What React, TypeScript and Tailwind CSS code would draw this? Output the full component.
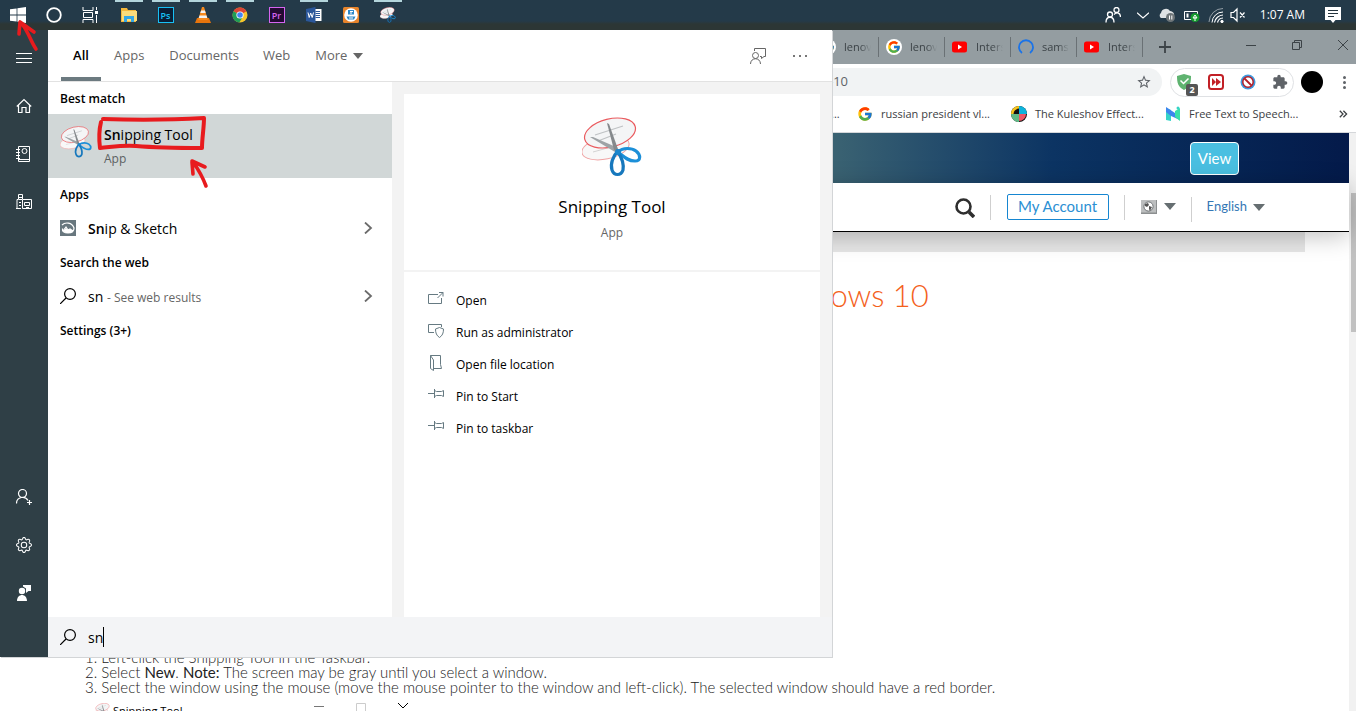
import type { ReactNode } from "react";
import clsx from "clsx";
import { FcGoogle } from "react-icons/fc";
import { BsGear } from "react-icons/bs";
import { MdExtension, MdStarBorder } from "react-icons/md";

type IconProps = { className?: string };

function Line({ className, children, box = 16 }: IconProps & { children: ReactNode; box?: number }) {
  return (
    <svg
      viewBox={`0 0 ${box} ${box}`}
      fill="none"
      stroke="currentColor"
      strokeWidth="1"
      className={clsx("shrink-0", className ?? "size-4")}
      aria-hidden="true"
    >
      {children}
    </svg>
  );
}

function SnippingIcon({ className }: IconProps) {
  return (
    <svg viewBox="0 0 60 60" fill="none" className={clsx("shrink-0", className)} aria-hidden="true">
      <ellipse cx="23.500" cy="31" rx="24" ry="11" transform="rotate(-12 23.500 31)" fill="#f8f8f8" stroke="#efa3a3" strokeWidth="1" />
      <path d="M11 35l18-5" stroke="#d4d4d4" />
      <ellipse cx="28" cy="16" rx="26" ry="14" transform="rotate(-14 28 16)" fill="#f4f5f6" stroke="#ea5a5e" strokeWidth="1.200" />
      <path d="M13 18l28-9M16 24l18-7" stroke="#bfc2c4" strokeWidth="1.200" />
      <path d="M8 20l3 0 23 10 2 4-3 1z" fill="#9ea3a6" />
      <path d="M25 6l2 1 9 25-1 3-3-2z" fill="#85898c" />
      <path d="M36 35c5-5 14-4 18-1 5 4 5 10-1 10-7 0-11-4-16-8" stroke="#1c8fd8" strokeWidth="3.200" />
      <path d="M36 34c-5 5-8 13-6 19 2 6 9 6 11 0 1-6-1-12-5-18" stroke="#1778bd" strokeWidth="3.200" />
      <circle cx="36" cy="35" r="3" fill="#1c86cc" />
    </svg>
  );
}

function PeopleIcon() {
  return (
    <Line className="size-4">
      <circle cx="5" cy="7.500" r="2.500" strokeWidth="1.300" />
      <path d="M1 15.500c0-7 8-7 8 0" strokeWidth="1.300" />
      <circle cx="11.500" cy="3" r="2.500" strokeWidth="1.300" />
      <path d="M9 7.500c3-3 6.500-1.500 6.500 2.500" strokeWidth="1.300" />
    </Line>
  );
}

const WindowsLogo = () => (
  <svg viewBox="0 0 16 16" className="size-4" fill="#fff" aria-hidden="true">
    <path d="M0 2.300l6.600-.9v6.200H0zM7.400 1.300L16 0v7.600H7.400zM0 8.400h6.600v6.200L0 13.700zM7.400 8.400H16V16l-8.600-1.200z" />
  </svg>
);

const CortanaRing = () => (
  <Line className="size-4">
    <circle cx="8" cy="8" r="6.800" strokeWidth="1.800" />
  </Line>
);

const TaskViewIcon = () => (
  <Line className="size-4">
    <path d="M1 0v3.500h10V0M1 16v-3.500h10V16M1.500 5.500h9v5h-9zM14.500 0v3M14.500 8v8" />
    <rect x="13" y="4" width="3" height="3" fill="currentColor" stroke="none" />
  </Line>
);

const FolderIcon = () => (
  <svg viewBox="0 0 16 16" className="size-4" aria-hidden="true">
    <path d="M0 1h6l1 2h8v12H0z" fill="#f5b83d" />
    <path d="M1 4h15v10H1z" fill="#fcdc7c" />
    <path d="M3 9h10v6h-3v-3H6v3H3z" fill="#35a7e6" />
  </svg>
);

function AdobeIcon({ label, tone }: { label: string; tone: string }) {
  return (
    <span className={clsx("flex size-4 items-center justify-center border font-['Open_Sans',sans-serif] text-[9px] font-semibold leading-none", tone)}>
      {label}
    </span>
  );
}

const VlcIcon = () => (
  <svg viewBox="0 0 16 16" className="size-4" aria-hidden="true">
    <path d="M2 11h12l2 5H0z" fill="#e8750c" />
    <path d="M7 0h2l4 13H3z" fill="#f58a1f" />
    <path d="M6.100 3.500h3.800l.8 2.500H5.300zM4.500 8.500h7l.8 2.500H3.700z" fill="#f3f3f3" />
  </svg>
);

const ChromeIcon = () => (
  <svg viewBox="0 0 16 16" className="size-4" aria-hidden="true">
    <circle cx="8" cy="8" r="7.500" fill="#f7c52b" />
    <path d="M8 8L1.500 4.200A7.500 7.500 0 0 1 14.500 4.300z" fill="#db4437" />
    <path d="M8 8L1.500 4.200A7.500 7.500 0 0 0 7.300 15.500L11 9.500z" fill="#1f9d58" />
    <circle cx="8" cy="8" r="3.600" fill="#fff" />
    <circle cx="8" cy="8" r="2.800" fill="#4285f4" />
  </svg>
);

const WordIcon = () => (
  <svg viewBox="0 0 16 16" className="size-4" aria-hidden="true">
    <path d="M8 2h7.500v12H8z" fill="#fff" />
    <path d="M9.500 4.500H14M9.500 6.500H14M9.500 8.500H14M9.500 10.500H14" stroke="#2b579a" />
    <path d="M0 2l9.500-2v16L0 14z" fill="#2b579a" />
    <path d="M2 5.500l1.200 5L4.700 6l1.500 4.500L7.500 5.500" stroke="#fff" fill="none" />
  </svg>
);

const OrangeAppIcon = () => (
  <svg viewBox="0 0 16 16" className="size-4" aria-hidden="true">
    <rect width="16" height="16" rx="1.500" fill="#e8842b" />
    <circle cx="8" cy="8" r="6.800" fill="#fff" />
    <path d="M5 3h6v4.500H5zM3.500 9.500h9L11 12.500H5z" fill="#2d88c9" />
    <path d="M7 4.500h3M7 6h2M6 11h4" stroke="#fff" />
  </svg>
);

const taskbarApps = [
  { name: "File Explorer", icon: <FolderIcon />, open: true },
  { name: "Photoshop", icon: <AdobeIcon label="Ps" tone="border-[#18c0f5] bg-[#0a1e36] text-[#18c0f5]" />, open: true },
  { name: "VLC", icon: <VlcIcon />, open: true },
  { name: "Chrome", icon: <ChromeIcon />, open: true },
  { name: "Premiere", icon: <AdobeIcon label="Pr" tone="border-[#d565f0] bg-[#230a33] text-[#d565f0]" />, open: false },
  { name: "Word", icon: <WordIcon />, open: true },
  { name: "Scanner", icon: <OrangeAppIcon />, open: false },
  { name: "Snipping Tool", icon: <SnippingIcon className="size-4" />, open: true },
];

function Taskbar() {
  return (
    <header className="flex h-[30px] shrink-0 items-center justify-between bg-linear-to-b from-[#243a49] from-70% to-[#2c3635] to-80% text-white">
      <div className="flex h-full items-center">
        <button aria-label="Start" className="flex h-full w-9 items-center justify-center"><WindowsLogo /></button>
        <button aria-label="Cortana" className="flex h-full w-9 items-center justify-center"><CortanaRing /></button>
        <button aria-label="Task view" className="flex h-full w-9 items-center justify-center"><TaskViewIcon /></button>
        <div className="ml-0.5 flex h-full">
          {taskbarApps.map((app) => (
            <button key={app.name} aria-label={app.name} className="flex h-full w-[37px] flex-col items-center">
              <span className={clsx("h-0.5 w-7", app.open && "bg-[#b4d5dc]")} />
              <span className="mt-[5px]">{app.icon}</span>
            </button>
          ))}
        </div>
      </div>

      <div className="flex h-full items-center pr-[15px]">
        <PeopleIcon />
        <Line className="ml-4 w-3"><path d="M0 5l8 7 8-7" strokeWidth="1.600" /></Line>
        <svg viewBox="0 0 16 14" className="ml-2.5 h-3.5 w-4" aria-hidden="true">
          <path d="M2 10a3 3 0 0 1 0-5 5 5 0 0 1 9-2 4 4 0 0 1 4 5v2z" fill="#dfe3e5" />
          <circle cx="11.500" cy="9.500" r="4.500" fill="#6f7679" />
          <path d="M10.500 7.500v4M12.800 7.500v4" stroke="#fff" />
        </svg>
        <svg viewBox="0 0 16 14" className="ml-[9px] h-3.5 w-4" fill="none" aria-hidden="true">
          <path d="M.5 3.500h13v8H.5z" stroke="#fff" />
          <path d="M2.500 5.500h2v4h-2z" fill="#fff" />
          <circle cx="11" cy="9.500" r="4.500" fill="#169b2e" />
          <path d="M9 10l2-3 2 3zM11 9v4" stroke="#fff" />
        </svg>
        <Line className="ml-2 size-4">
          <path d="M6.500 15.500A9 9 0 0 1 15 8M9.500 15.500A6 6 0 0 1 15 11" strokeWidth="1.200" />
          <path d="M4 15.500A11 11 0 0 1 15 5" />
          <path d="M1 15A14 14 0 0 1 15 1.500" opacity=".5" />
          <circle cx="14" cy="14.500" r="1.200" fill="currentColor" />
        </Line>
        <Line className="ml-1.5 size-4">
          <path d="M1 5.500h2.500L7 2v12l-3.500-3.500H1zM10 5.500l4.500 5M14.500 5.500l-4.500 5" strokeWidth="1.200" />
        </Line>
        <time className="ml-3.5 text-[12px]">1:07 AM</time>
        <svg viewBox="0 0 16 16" className="ml-5 size-4" aria-hidden="true">
          <path d="M0 0h16v13h-5.500L8 16l-2.500-3H0z" fill="#fff" />
          <path d="M3 3.500h10M3 6.500h10M3 9.500h6" stroke="#24343d" />
        </svg>
      </div>
    </header>
  );
}

const YoutubeIcon = () => (
  <svg viewBox="0 0 16 16" className="size-4 shrink-0" aria-hidden="true">
    <rect x="0" y="2.500" width="15" height="11" rx="2.500" fill="#f00" />
    <path d="M6 5.500v5l4-2.500z" fill="#fff" />
  </svg>
);

const GoogleBadge = () => (
  <span className="flex size-4 shrink-0 items-center justify-center rounded-full bg-white"><FcGoogle className="size-3.5" /></span>
);

const LoadingRing = () => (
  <Line className="size-4 text-[#1a73e8]"><path d="M4 14A7 7 0 1 1 12 14" strokeWidth="1.800" /></Line>
);

const browserTabs = [
  { id: 1, label: "lenovo", icon: <GoogleBadge /> },
  { id: 2, label: "lenovo", icon: <GoogleBadge /> },
  { id: 3, label: "Interstellar", icon: <YoutubeIcon /> },
  { id: 4, label: "samsung", icon: <LoadingRing /> },
  { id: 5, label: "Interstellar", icon: <YoutubeIcon /> },
];

function TabStrip() {
  return (
    <div className="flex h-[34px] items-center bg-[#949da1] pl-[813px] text-[#3c4347]">
      {browserTabs.map((tab) => (
        <button key={tab.id} className="flex h-5 w-[66px] items-center gap-2 border-r border-[#6a7175] px-[7px]">
          {tab.icon}
          <span className="min-w-0 flex-1 overflow-hidden whitespace-nowrap mask-r-from-60% text-left text-[11px]">{tab.label}</span>
        </button>
      ))}
      <button aria-label="New tab" className="ml-4"><Line className="size-3"><path d="M8 0v16M0 8h16" strokeWidth="2.400" /></Line></button>
      <div className="ml-auto flex gap-9 pb-1 pr-2">
        <button aria-label="Minimize"><Line className="size-2.5" box={10}><path d="M0 5.500h10" /></Line></button>
        <button aria-label="Restore"><Line className="size-2.5" box={10}><path d="M.5 2.500h7v7h-7zM2.500 2.500v-2h7v7h-2" /></Line></button>
        <button aria-label="Close"><Line className="size-2.5" box={10}><path d="M0 0l10 10M10 0L0 10" /></Line></button>
      </div>
    </div>
  );
}

function Toolbar() {
  return (
    <div className="flex h-9 items-center bg-white pr-2.5">
      <div className="flex h-7 flex-1 items-center justify-between rounded-full bg-[#f1f3f4] pl-[829px] pr-2.5 text-[13px] text-[#5f6368]">
        <span>-10</span>
        <button aria-label="Bookmark this page"><MdStarBorder className="size-4" /></button>
      </div>
      <div className="ml-2 flex h-[29px] items-center gap-4 rounded-full border border-[#dfe1e4] px-[5px]">
        <button aria-label="Ad blocker" className="relative">
          <svg viewBox="0 0 16 16" className="size-4" aria-hidden="true">
            <path d="M8 0l7 2c0 7-1 11-7 14C2 13 1 9 1 2z" fill="#5fb370" />
            <path d="M4.500 6.500l3 3 5-5" stroke="#fff" strokeWidth="1.500" fill="none" />
          </svg>
          <span className="absolute -right-1.5 top-2.5 h-3 w-3 rounded-xs bg-[#555] text-center text-[9px] font-bold leading-3 text-white">2</span>
        </button>
        <button aria-label="Skip">
          <svg viewBox="0 0 16 16" className="size-4" aria-hidden="true">
            <rect x="1" y="1" width="14" height="14" rx="2.500" fill="#fff" stroke="#c22026" strokeWidth="2" />
            <path d="M4 4l4 4-4 4zM8 4l5 4-5 4z" fill="#c22026" />
          </svg>
        </button>
        <button aria-label="Block">
          <svg viewBox="0 0 16 16" className="size-4" aria-hidden="true">
            <circle cx="8" cy="8" r="7.500" fill="#3e9be0" />
            <circle cx="8" cy="8" r="5.200" fill="#fff" stroke="#b3202a" strokeWidth="1.500" />
            <path d="M4.500 4.500l7 7" stroke="#b3202a" strokeWidth="1.800" />
          </svg>
        </button>
        <button aria-label="Extensions"><MdExtension className="size-4 text-[#5f6368]" /></button>
      </div>
      <button aria-label="Profile" className="ml-[7px] size-[22px] rounded-full bg-black" />
      <button aria-label="Menu" className="ml-[19px] flex w-1 flex-col items-center gap-0.5">
        <span className="size-[3px] rounded-full bg-[#5f6368]" />
        <span className="size-[3px] rounded-full bg-[#5f6368]" />
        <span className="size-[3px] rounded-full bg-[#5f6368]" />
      </button>
    </div>
  );
}

function Bookmarks() {
  return (
    <nav className="flex h-[33px] items-center border-b border-[#d5d7da] bg-white pb-1 pl-[831px] pr-2 text-[11px] text-[#3c4043]">
      <span className="w-[26px]">...</span>
      <a href="#russian" className="flex w-[154px] items-center gap-2 whitespace-nowrap"><FcGoogle className="size-4 shrink-0" />russian president vl...</a>
      <a href="#kuleshov" className="flex w-[154px] items-center gap-2 whitespace-nowrap">
        <svg viewBox="0 0 16 16" className="size-4 shrink-0" aria-hidden="true">
          <circle cx="8" cy="8" r="8" fill="#111" />
          <path d="M8 8V0a8 8 0 0 1 8 8z" fill="#0db4dd" />
          <path d="M8 8h7a7 7 0 0 1-7 7z" fill="#ef5666" />
          <path d="M8 8v8a8 8 0 0 1-8-8z" fill="#5fb986" />
          <path d="M0 8a8 8 0 0 1 8-8v2.500A6 6 0 0 0 2.500 8z" fill="#f7c51e" />
        </svg>
        The Kuleshov Effect...
      </a>
      <a href="#speech" className="flex items-center gap-2 whitespace-nowrap">
        <svg viewBox="0 0 16 16" className="size-4 shrink-0" aria-hidden="true">
          <path d="M1 2l5 2v11l-5-1z" fill="#35d3c8" />
          <path d="M1 1l9 6 5 7-9-4-5-4z" fill="#3c86ee" />
          <path d="M10 5l5-3v13l-5-4z" fill="#3be0a8" />
          <circle cx="13" cy="2" r="1.500" fill="#35d3c8" />
        </svg>
        Free Text to Speech...
      </a>
      <button aria-label="More bookmarks" className="ml-auto">
        <Line className="h-2 w-2.5" box={10}><path d="M1 1l4 4-4 4M5.500 1l4 4-4 4" strokeWidth="1.600" /></Line>
      </button>
    </nav>
  );
}

const Caret = ({ className }: IconProps) => (
  <svg viewBox="0 0 12 7" className={className} fill="currentColor" aria-hidden="true"><path d="M0 0h12L6 7z" /></svg>
);

function WebPage() {
  return (
    <div className="flex min-h-0 flex-1 bg-white">
      <div className="flex min-w-0 flex-1 flex-col font-[Lato,sans-serif]">
        <div className="flex h-[50px] shrink-0 items-center justify-end bg-linear-to-r from-[#3a6272] from-62% via-[#0c3463] via-78% to-[#041a4a] pr-[110px]">
          <button className="h-[33px] w-[49px] rounded-sm border border-white bg-[#4abfe1] text-[15px] text-white">View</button>
        </div>
        <div className="z-0 flex h-[49px] shrink-0 items-center justify-end border-b border-black bg-white pr-[84px] shadow-[0_4px_24px_rgba(0,0,0,0.25)]">
          <button aria-label="Search">
            <Line className="mt-0.5 size-5 text-[#2e2e2e]" box={20}><circle cx="8.500" cy="8.500" r="7" strokeWidth="2.600" /><path d="M14 14l5 5" strokeWidth="3.600" /></Line>
          </button>
          <span className="ml-[15px] h-[25px] w-px bg-[#cfcfcf]" />
          <button className="ml-4 h-[26px] w-[102px] rounded-xs border border-[#1686d1] pb-0.5 text-[15px] leading-none text-[#2b8fd3]">My Account</button>
          <span className="ml-[15px] h-[25px] w-px bg-[#cfcfcf]" />
          <button aria-label="Region" className="ml-4 flex items-center gap-[7px] text-[#666e71]">
            <svg viewBox="0 0 16 14" className="h-3.5 w-4" aria-hidden="true">
              <path d="M0 0h16v14H0z" fill="#8c8f90" />
              <path d="M0 0h15v12.500H0z" fill="#bcbebf" />
              <circle cx="7.500" cy="6.500" r="4.600" fill="#fff" stroke="#6d7173" />
              <path d="M4 4l3-1 1 2-2 2-2-1zM8 6l3 1-2 4-1-2z" fill="#555" />
            </svg>
            <Caret className="mb-0.5 h-[7px] w-3" />
          </button>
          <span className="ml-[15px] mt-1 h-[25px] w-px bg-[#cfcfcf]" />
          <button className="ml-[15px] flex items-center gap-1.5 text-[13px] text-[#3577b5]">English <Caret className="h-[7px] w-3 text-[#666e71]" /></button>
        </div>
        <div className="mr-11 h-5 shrink-0 bg-[#e6e6e6]" />
        <h1 className="ml-[758px] mt-[25px] text-[31px] font-light leading-9 text-[#f4611b]">Windows 10</h1>
        <ol className="mt-auto list-inside list-decimal pl-[85px] text-[15px] font-light leading-[15px] text-[#222]">
          <li>Left-click the Snipping Tool in the Taskbar.</li>
          <li>Select <b>New</b>. <b>Note:</b> The screen may be gray until you select a window.</li>
          <li>Select the window using the mouse (move the mouse pointer to the window and left-click). The selected window should have a red border.</li>
        </ol>
        <div className="flex h-4 shrink-0 items-start overflow-hidden pl-[95px] pt-2 font-['Open_Sans',sans-serif] text-[11px] leading-4 text-black">
          <SnippingIcon className="mr-0.5 size-4" />
          <span className="w-[201px]">Snipping Tool</span>
          <Line className="w-2.5 text-[#777]" box={10}><path d="M0 3.500h10" /></Line>
          <Line className="ml-8 size-2.5 text-[#ccc]" box={10}><path d="M.5.500h9v9h-9z" /></Line>
          <Line className="ml-8 size-2.5" box={10}><path d="M0 0l5 5 5-5" /></Line>
        </div>
      </div>
      <div className="flex w-[7px] shrink-0 flex-col bg-[#f1f1f1] pl-0.5 pt-[60px]">
        <div className="h-[139px] bg-[#c1c1c1]" />
      </div>
    </div>
  );
}

const railTop = [
  { name: "Menu", icon: <Line><path d="M0 3.500h16M0 8.500h16M0 12.500h16" /></Line> },
  { name: "Home", icon: <Line><path d="M.8 8.500L8 1.500l7.200 7M2.500 7.500v7h3.500v-5h4v5h3.500v-7" strokeWidth="1.200" /></Line> },
  { name: "Notebook", icon: <Line><path d="M2.500.5h11v15h-11zM0 3.500h4M0 6.500h4M0 9.500h4M0 12.500h4M2.500 13.500h11" /><circle cx="8.500" cy="5" r="2.500" /></Line> },
  { name: "Devices", icon: <Line><path d="M1 14V5.500h1.500v-5h4v4.500M0 14.500h5M3 3.500h3M3 5.500h3M3 8.500h2M3 11.500h2M6.500 5.500h9v9h-9zM8.500 8.500h5v3h-5zM10 13.500h3" /></Line> },
];

const railBottom = [
  { name: "Account", icon: <Line><circle cx="6.500" cy="4.500" r="4" strokeWidth="1.200" /><path d="M.5 14.500c0-7 9-8 11.500-3M13.500 11v5M11 13.500h5" strokeWidth="1.200" /></Line> },
  { name: "Settings", icon: <BsGear className="size-4" /> },
  { name: "Feedback", icon: <svg viewBox="0 0 16 16" className="size-4" fill="#fff" aria-hidden="true"><circle cx="6" cy="6" r="3.200" /><path d="M1 16c0-8 10-8 10 0zM7 0h8v6h-2.500L10 8V3.500L7 1.500z" /></svg> },
];

function Rail() {
  return (
    <nav className="flex w-12 shrink-0 flex-col bg-[#2f3f46] pb-10 pt-1 text-white">
      {railTop.map((item) => (
        <button key={item.name} aria-label={item.name} className="flex h-12 items-center justify-center">{item.icon}</button>
      ))}
      <div className="flex-1" />
      {railBottom.map((item) => (
        <button key={item.name} aria-label={item.name} className="flex h-12 items-center justify-center">{item.icon}</button>
      ))}
    </nav>
  );
}

const SearchGlyph = () => (
  <Line className="size-4"><circle cx="10" cy="6" r="5.400" strokeWidth="1.200" /><path d="M6 10l-6 6" strokeWidth="1.200" /></Line>
);

const Chevron = () => (
  <Line className="ml-auto mr-[18px] size-3 text-[#6b6b6b]" box={12}><path d="M3 .5l6 5.500-6 5.500" strokeWidth="1.800" /></Line>
);

const SectionTitle = ({ children }: { children: ReactNode }) => (
  <h2 className="flex h-8 items-center px-3 pt-0.5 text-[12px] font-semibold">{children}</h2>
);

function Results() {
  return (
    <section className="w-[344px] shrink-0 bg-white text-black">
      <SectionTitle>Best match</SectionTitle>
      <button className="flex h-16 w-full items-start bg-[#d1d7d7] px-3 pt-2.5 text-left">
        <SnippingIcon className="mt-0.5 size-8" />
        <span className="ml-3 text-[14px] leading-[22px]">
          <b className="font-semibold">Sn</b>ipping Tool
          <span className="block pt-0.5 text-[12px] text-[#5c6162]">App</span>
        </span>
      </button>
      <SectionTitle>Apps</SectionTitle>
      <button className="flex h-9 w-full items-center pl-3 text-[14px]">
        <svg viewBox="0 0 16 16" className="mr-3 size-4" aria-hidden="true">
          <path d="M0 0h16v16H0z" fill="#68777e" />
          <path d="M2 5c3-3 10-3 12 3 0 4-3 5-6 5-4 0-6-2-5.500-4.500M3 11l3-4 2 3 2-1 3 2" stroke="#fff" strokeWidth="1.200" fill="none" />
          <path d="M3 11l3-3 2 2 2-1 3 2-3 2H6z" fill="#fff" />
        </svg>
        <span><b className="font-semibold">Sn</b>ip &amp; Sketch</span>
        <Chevron />
      </button>
      <SectionTitle>Search the web</SectionTitle>
      <button className="flex h-9 w-full items-center pl-3 text-[14px]">
        <SearchGlyph />
        <span className="ml-3">sn <span className="text-[12px] text-[#666]">- See web results</span></span>
        <Chevron />
      </button>
      <SectionTitle>Settings (3+)</SectionTitle>
    </section>
  );
}

const PinIcon = () => <Line><path d="M0 6.500h6M6.500 2v9M6.500 3.500l2 1h5l2-1v6l-2-1h-5l-2 1" /></Line>;

const actions = [
  { label: "Open", icon: <Line><path d="M10 3.500H.5v9h13V7M9.500 7l5.500-5.500M11 1.500h4v4" /></Line> },
  { label: "Run as administrator", icon: <Line><path d="M6 9.500H.5v-8h13V4M11.500 4.500l4 1.500c0 4-1 6.500-4 8.500-3-2-4-4.500-4-8.500z" /></Line> },
  { label: "Open file location", icon: <Line><path d="M2.500.5h10v9l1 4H6M2.500.5v13l3 2V5z" /></Line> },
  { label: "Pin to Start", icon: <PinIcon /> },
  { label: "Pin to taskbar", icon: <PinIcon /> },
];

function Details() {
  return (
    <section className="flex-1 bg-[#f3f3f3] px-3 pt-3">
      <div className="h-full bg-white">
        <div className="flex h-[178px] flex-col items-center border-b-2 border-[#f3f3f3] pt-[23px]">
          <SnippingIcon className="size-[60px]" />
          <h1 className="mt-4 text-[17px] leading-7 text-black">Snipping Tool</h1>
          <p className="mt-0.5 text-[12px] leading-5 text-[#666]">App</p>
        </div>
        <ul className="pt-[13px]">
          {actions.map((action) => (
            <li key={action.label}>
              <button className="flex h-8 w-full items-center gap-3 px-6 text-[12px] text-black">
                <span className="mb-1 text-[#667a82]">{action.icon}</span>
                {action.label}
              </button>
            </li>
          ))}
        </ul>
      </div>
    </section>
  );
}

function SearchFlyout() {
  return (
    <div className="absolute bottom-[54px] left-0 top-[30px] z-10 flex w-[832px] shadow-[1px_1px_0_#d3d5d7]">
      <Rail />
      <div className="flex min-w-0 flex-1 flex-col bg-white">
        <div className="flex h-[52px] shrink-0 items-stretch border-b border-[#e2e2e2] text-[13px] text-[#666]">
          <button className="ml-[13px] w-10 border-b-4 border-[#6c7a80] pt-1 font-semibold text-black">All</button>
          <button className="ml-[13px]">Apps</button>
          <button className="ml-[25px]">Documents</button>
          <button className="ml-6">Web</button>
          <button className="ml-[25px] flex items-center gap-1.5">More <Caret className="h-1.5 w-2.5" /></button>
          <button aria-label="Feedback" className="ml-auto">
            <Line className="size-4"><circle cx="5.500" cy="7.500" r="3" /><path d="M.5 16c0-7 10-7 10 0M4.500 3V.5h11v8H14l-2.500 2v-2H10" /></Line>
          </button>
          <button aria-label="More options" className="ml-[27px] mr-[25px] flex items-center gap-1">
            <span className="size-0.5 bg-[#777]" />
            <span className="size-0.5 bg-[#777]" />
            <span className="size-0.5 bg-[#777]" />
          </button>
        </div>
        <div className="flex min-h-0 flex-1">
          <Results />
          <Details />
        </div>
        <label className="flex h-10 shrink-0 items-center bg-[#f3f4f6] px-3 text-[14px] text-black">
          <SearchGlyph />
          <input aria-label="Search" defaultValue="sn" className="ml-3 field-sizing-content outline-none" />
          <span className="h-5 w-px bg-black" />
        </label>
      </div>
    </div>
  );
}

// hand-drawn red marks laid over the screen
function Annotations() {
  return (
    <svg viewBox="0 0 240 200" className="pointer-events-none absolute left-0 top-0 z-20 h-[200px] w-60" fill="none" stroke="#e81b1e" strokeLinecap="round" strokeLinejoin="round" aria-hidden="true">
      <path d="M36 49c-5-7-7-16-14-25M19 34l1-12M20 22l14 10" strokeWidth="3.600" />
      <path d="M101 122c-2 8-2 18-1 26M103 119c33 1 66 1 101-1M204 118c0 10-2 20-2 30M100 148c12-1 22-3 36-2 24 2 44 2 66 2" strokeWidth="4" />
      <path d="M206 186c-3-8-8-17-13-24M193 174l-1-12M192 161l13 6" strokeWidth="3.600" />
    </svg>
  );
}

export default function App() {
  return (
    <div className="relative flex h-screen flex-col overflow-hidden bg-white font-['Open_Sans','Noto_Sans',sans-serif]">
      <Taskbar />
      <main className="flex min-h-0 flex-1 flex-col">
        <TabStrip />
        <Toolbar />
        <Bookmarks />
        <WebPage />
      </main>
      <SearchFlyout />
      <Annotations />
    </div>
  );
}
